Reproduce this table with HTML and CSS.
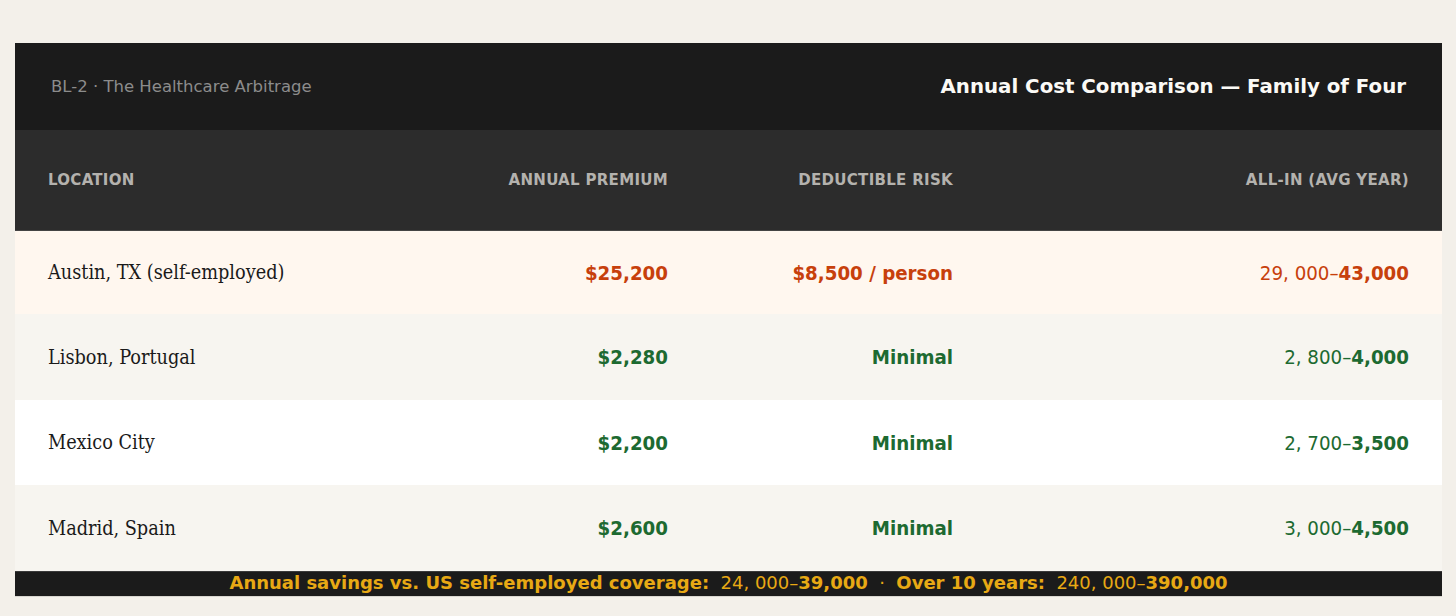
FILE: index.html
```html
<!DOCTYPE html>
<html>
<head>
<meta charset="utf-8">
<link rel="stylesheet" href="styles.css">
</head>
<body>
<div class="card">
  <div class="top">
    <div class="tag">BL-2 · The Healthcare Arbitrage</div>
    <div class="title">Annual Cost Comparison — Family of Four</div>
  </div>
  <div class="grid head">
    <div class="c1">LOCATION</div>
    <div class="cr">ANNUAL PREMIUM</div>
    <div class="cr">DEDUCTIBLE RISK</div>
    <div class="cr">ALL-IN (AVG YEAR)</div>
  </div>
  <div class="grid row us">
    <div class="c1 loc">Austin, TX (self-employed)</div>
    <div class="cr val">$25,200</div>
    <div class="cr val">$8,500 / person</div>
    <div class="cr rng"><span class="m">29, 000–</span><b>43,000</b></div>
  </div>
  <div class="grid row alt good">
    <div class="c1 loc">Lisbon, Portugal</div>
    <div class="cr val">$2,280</div>
    <div class="cr val">Minimal</div>
    <div class="cr rng"><span class="m">2, 800–</span><b>4,000</b></div>
  </div>
  <div class="grid row white good">
    <div class="c1 loc">Mexico City</div>
    <div class="cr val">$2,200</div>
    <div class="cr val">Minimal</div>
    <div class="cr rng"><span class="m">2, 700–</span><b>3,500</b></div>
  </div>
  <div class="grid row alt good">
    <div class="c1 loc">Madrid, Spain</div>
    <div class="cr val">$2,600</div>
    <div class="cr val">Minimal</div>
    <div class="cr rng"><span class="m">3, 000–</span><b>4,500</b></div>
  </div>
  <div class="foot">
    <b>Annual savings vs. US self-employed coverage:</b>&nbsp; <span class="m">24, 000–</span><b>39,000</b> &nbsp;·&nbsp; <b>Over 10 years:</b>&nbsp; <span class="m">240, 000–</span><b>390,000</b>
  </div>
</div>
</body>
</html>
```

FILE: styles.css
```css
html, body {
  margin: 0;
  padding: 0;
  background: #f3f0ea;
}
body {
  padding: 43px 14px 0 15px;
  font-family: "DejaVu Sans", sans-serif;
}
.card {
  width: 1427px;
  display: flex;
  flex-direction: column;
}
.top {
  background: #1b1b1b;
  height: 87px;
  display: flex;
  align-items: center;
  justify-content: space-between;
  padding: 0 36px;
}
.tag {
  color: #8c8c8c;
  font-size: 16.5px;
}
.title {
  color: #fbfaf6;
  font-size: 19.8px;
  font-weight: bold;
}
.grid {
  display: grid;
  grid-template-columns: 400px 286px 285px 456px;
  align-items: center;
}
.grid > div {
  padding: 0 33px;
}
.cr { text-align: right; }
.head {
  background: #2c2c2c;
  color: #b4b2ae;
  font-family: "DejaVu Sans Condensed", "DejaVu Sans", sans-serif;
  font-weight: bold;
  font-size: 16.7px;
  font-stretch: condensed;
  letter-spacing: 0.3px;
  border-bottom: 1px solid #444;
  padding-bottom: 2px;
  box-sizing: border-box;
  height: 101px;
}
.row {
  height: 85px;
}
.us { background: #fff7ef; color: #c7400c; height: 83px; }
.alt { background: #f7f5f0; height: 86px; }
.white { background: #ffffff; }
.good { color: #1d6a31; }
.loc {
  font-family: "DejaVu Serif Condensed", "DejaVu Serif", serif;
  font-stretch: condensed;
  font-size: 19.7px;
  color: #1a1a1a;
}
.val, .rng {
  font-family: "DejaVu Sans Condensed", "DejaVu Sans", sans-serif;
  font-stretch: condensed;
  font-size: 20.3px;
}
.val { font-weight: bold; }
.rng b { font-weight: bold; }
.m { font-weight: normal; }
.foot {
  background: #1b1b1b;
  height: 26px;
  box-sizing: border-box;
  padding-bottom: 3px;
  color: #e8a914;
  font-size: 18px;
  line-height: 20px;
  display: flex;
  align-items: center;
  justify-content: center;
  white-space: pre;
  border-top: 1px solid #3a3a3a;
  border-bottom: 1px solid #d8d6d0;
}
```
